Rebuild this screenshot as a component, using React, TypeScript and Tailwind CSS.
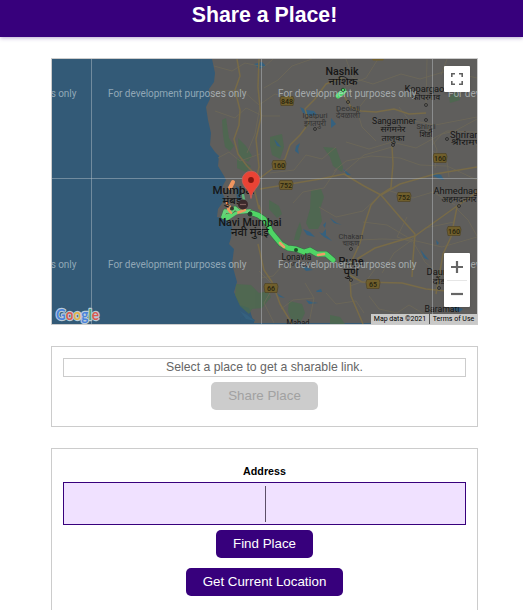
import React from "react";

type Pt = { x: number; y: number };

const PURPLE_BTN =
  "flex h-7 items-center justify-center rounded-[5px] bg-[#37007c] pb-px text-[13.33px] text-white";

const lakes = [
  "M254 64l8-2 4 4-7 3z", "M300 107l6 3 8 1 3 4-7 1-7-3z", "M274 139l4 4 3 4-4-1z",
  "M296 146l4-3-2 6 1 5-4-3z", "M331 118l5 6-5 4z", "M433 173l8 2 3 5-4-1-7-3z", "M343 169l8 6-4 0z",
  "M303 229l7 3 5 5-8-2z", "M319 232l8 4 5 5-8-4z", "M301 265l12 5-7 1z", "M306 300l6 2 6 1-9 1z",
  "M316 291l5-2 1 3-5 0z", "M276 293l9 5-5-1z", "M330 218l7 5 5 2-8-2z", "M420 249l4 5 5 6-5-2z", "M454 306l9 3-3 3-8-2z",
  "M240 311l7 4 8 6-9-2z", "M323 225l3-3-1 6z", "M321 235l5-6 0 6z", "M436 240l3 3-2 2z",
];

const forests = [
  "M222 120l4-2 3 20 5 8-4 5-5-4-2-12z", "M238 138l8 8 6 10-4 6-9-6z",
  "M237 158l6 3 8 5-5 6-9-4z",
  "M270 137l12-3 2 13-4 12-8-4-2-10z", "M323 147l13 1 7 19-1 5-9-6-3-9z", "M311 190l10-1 3 8-4 12 2 12-4 8-9 0-3-6 4-14z",
  "M269 200l10 6 3 8-5 4-8-9z", "M236 284l15 1 8 8 9-2 3 6-9 11-10 1-3 5-9-8-5-11z",
  "M289 301l13 3 3 9-4 8-10-2-3-8z", "M296 232l4-10 2 8-3 10-5 0z",
  "M330 315l10 2 5 7h-15z", "M449 97l7-5 4 8-10 3z",
];

const mainRoads = [
  "M237 59l3 17-5 14 5 20-1 15-5 14 4 15 9 12 9 9",
  "M259 59l-1 28 3 30-5 22 3 28-5 21 5 21",
  "M342 78l-11 4-5 2-12 16-9 9 4 14-9 12-10 10-5 14-13 10-12 9",
  "M343 94l8 13 10 4 15 1 18-3 15 5 17-1",
  "M392 146l1 18-2 24-11 7-9 10-6 18-5 20-10 22",
  "M260 189l30-5 30-5 24-5 20 12 17 9 19-11 35-10 42-7",
  "M381 195l18 21 16 18-2 25-1 18",
  "M477 192l-20 14-42 30-40 12-18 11",
  "M457 207l-6 30-8 17-7 40",
  "M259 205l4 17 14 20",
  "M258 244l6 26 8 12 8 22 12 20", "M350 278l1 18 12 28", "M348 274l14 8 40 1 24 6 30 3",
];

const smallRoads = [
  "M214 66l18 5 13-8 19 4 9-8M220 91l22-1 17 15 16-11 11 3", "M215 111l20 7 11-10 17 8 17 0",
  "M264 88l14-8 14-14 20-7M260 106l-5 28-8 19M218 158l11-6 11 9 20-7",
  "M346 59l7 19 20 6 28-10 19 5 27-8 30 7", "M346 86l20-8 12-19M369 95l-12 15 5 17 14 14M399 107l10 13 26 5 42-8",
  "M346 142l23 7 23-7 24 6 31-17 30 1", "M334 171l12-10 25-5 29 2 20 7 27 1 30 14",
  "M387 190l26 8 20-6 22 13M319 207l17 10 27-6 16-15", "M359 240l23-1 30 1 30 7 35-10M412 240l-25-15-24-3",
  "M411 240l14-12 29-6M412 240l-18 13-12 20M412 240l13 22 17 15M350 286l17-6 13-18",
  "M293 203l10-11 21-4 13-19M282 266l-9 10-12 2M259 271l15 15-10 17 10 20",
  "M326 293l10 11 20-3 8 12M369 296l10 13 18 4 12-8 20 12M305 283l9 15-5 25M281 309l12-9 21-2",
  "M455 207l13 13 9 16M432 145l10-11 13-3 22-12M433 151l14 11 2 15M270 173l24-3 12-15 16 4 14-12",
  "M427 59l-1 46M427 125l10 25-2 18M447 59l-6 16M392 147l-28 8-20 17M407 217l-10 20 15 5",
];

const shields: { x: number; y: number; t: string }[] = [
  { x: 287, y: 101, t: "848" }, { x: 279, y: 165, t: "160" }, { x: 286, y: 185, t: "752" },
  { x: 271, y: 288, t: "66" }, { x: 404, y: 197, t: "752" }, { x: 440, y: 158, t: "160" },
  { x: 454, y: 231, t: "160" }, { x: 373, y: 284, t: "65" },
];

const labels: { x: number; y: number; t: string; w: number; s?: number; bold?: boolean; faint?: boolean }[] = [
  { x: 342, y: 75, t: "Nashik", w: 33, s: 10, bold: true },
  { x: 343, y: 85, t: "नाशिक", w: 29, s: 10, bold: true },
  { x: 348, y: 111, t: "Deolali", w: 24, s: 8, faint: true },
  { x: 348, y: 118, t: "देवळाली", w: 24, s: 8, faint: true },
  { x: 315, y: 118, t: "Igatpuri", w: 25, s: 8, faint: true },
  { x: 315, y: 126, t: "इगतपुरी", w: 22, s: 8, faint: true },
  { x: 427, y: 92, t: "Kopargaon", w: 45, s: 8.5 },
  { x: 426, y: 100, t: "कोपरगाव", w: 28, s: 8 },
  { x: 394, y: 124, t: "Sangamner", w: 44, s: 8.5 },
  { x: 393, y: 132, t: "संगमनेर", w: 25, s: 8.5 },
  { x: 393, y: 141, t: "तालुका", w: 23, s: 8.5 },
  { x: 426, y: 129, t: "Shirdi", w: 19, s: 8, faint: true },
  { x: 426, y: 137, t: "शिर्डी", w: 13, s: 8 },
  { x: 473, y: 138, t: "Shrirampur", w: 46, s: 8.5 },
  { x: 468, y: 145, t: "श्रीरामपूर", w: 34, s: 8 },
  { x: 460, y: 194, t: "Ahmednagar", w: 53, s: 9.5 },
  { x: 459, y: 202, t: "अहमदनगर", w: 35, s: 8.5 },
  { x: 233.5, y: 194, t: "Mumbai", w: 42, s: 10.5, bold: true },
  { x: 232, y: 204, t: "मुंबई", w: 19, s: 10, bold: true },
  { x: 250, y: 226, t: "Navi Mumbai", w: 63, s: 10.5, bold: true },
  { x: 250, y: 236, t: "नवी मुंबई", w: 38, s: 10.5, bold: true },
  { x: 296.5, y: 260, t: "Lonavla", w: 30, s: 9 },
  { x: 297, y: 267, t: "लोणावळा", w: 27, s: 8, faint: true },
  { x: 351, y: 239, t: "Chakan", w: 25, s: 8, faint: true },
  { x: 351, y: 246, t: "चाकण", w: 17, s: 8, faint: true },
  { x: 351, y: 264.5, t: "Pune", w: 25, s: 10.5, bold: true },
  { x: 351, y: 276, t: "पुणे", w: 15, s: 10.5, bold: true },
  { x: 440, y: 275, t: "Daund", w: 27, s: 9 },
  { x: 439, y: 284, t: "दौंड", w: 13, s: 8.5 },
  { x: 442, y: 312, t: "Baramati", w: 35, s: 9 },
  { x: 298, y: 326, t: "Mahad", w: 23, s: 8.5 },
];

const towns: Pt[] = [
  { x: 426, y: 105 }, { x: 393, y: 145 }, { x: 426, y: 120 }, { x: 447, y: 139 }, { x: 459, y: 206 },
  { x: 439, y: 288 }, { x: 351, y: 280 }, { x: 351, y: 249 }, { x: 315, y: 129 }, { x: 348, y: 102 },
];

const tileRows = [97, 267.5];
const tileCols = [-62, 108, 278, 448];

const EXPRESSWAY = "M252 213L258 215 264 219 268 225 271 232 276 238 281 244 288 248 296 249 304 252 310 250 317 254 326 254 333 260";
const CITY = "M223 217l2-6 6 1 4-4 5 4 10-1";

function RoadMap() {
  return (
    <svg viewBox="52 59 425 265" className="block h-[265px] w-[425px]" fontFamily='"Roboto", "Noto Sans", "Liberation Sans", sans-serif'>
      <rect x="52" y="59" width="425" height="265" fill="#335a77" />
      <path
        d="M212 59l3 14-1 9-5 7 1 10-4 8 2 13 3 13-1 12 5 7 4 4-1 10 6 10 2 4-5 9 4 10-7 10-1 8 9 2 6 8-1 11-2 6 5 5-2 15 5 18-3 10 6 13 9 3 5 15H477V59z"
        fill="#5f5e5c"
      />
      <path d="M236 186l5 3-1 12-3-1z M240 318l6-3 9 5-2 4h-12z" fill="#315a77" />
      <g fill="#4c6a4f" opacity="0.8">{forests.map((d) => <path key={d} d={d} />)}</g>
      <g fill="#35617f">{lakes.map((d) => <path key={d} d={d} />)}</g>
      <g fill="none" stroke="#6f6a58" strokeWidth="0.9" opacity="0.85">{smallRoads.map((d) => <path key={d} d={d} />)}</g>
      <g fill="none" stroke="#786b48" strokeWidth="1.5" strokeLinejoin="round">{mainRoads.map((d) => <path key={d} d={d} />)}</g>

      {shields.map((s) => (
        <g key={`${s.x}-${s.y}`}>
          <path d={`M${s.x - 6} ${s.y - 4.5}h12l1 3-1 6h-12l-1-6z`} fill="#705f2c" stroke="#4f4425" strokeWidth="0.7" />
          <text x={s.x} y={s.y + 2.7} fontSize="7" fontWeight="500" textAnchor="middle" fill="#26230f">{s.t}</text>
        </g>
      ))}
      <path d="M372 59h12l-1 1.5h-10z" fill="#705f2c" />

      <g fill="none" strokeLinecap="round" strokeLinejoin="round">
        <path d="M230 188l3-6" stroke="#ef955f" strokeWidth="4" />
        <path d="M243 195l1 5" stroke="#5fae78" strokeWidth="2.5" />
        <path d="M224 216l5-6 8-1 6 3" stroke="#e9a45d" strokeWidth="3.5" />
        <path d={CITY} stroke="#3f744c" strokeWidth="4.6" />
        <path d={CITY} stroke="#67d47a" strokeWidth="3.4" />
        <path d={EXPRESSWAY} stroke="#397148" strokeWidth="6" />
        <path d={EXPRESSWAY} stroke="#4fd465" strokeWidth="4.8" />
        <path d="M237 213l8-3M228 209l3 4M227 203l3 4" stroke="#ec9a5f" strokeWidth="2.5" />
        <path d="M223 217l7-2M227 219l9-6" stroke="#5bd870" strokeWidth="3" />
        <path d="M280 243l4 4M318 255l6-1" stroke="#ee9c68" strokeWidth="2.6" />
        <path d="M338 96l6-5" stroke="#4fd469" strokeWidth="5" />
      </g>

      <g fill="none" stroke="#2b2b2b" strokeWidth="0.9">
        {towns.map((p) => <circle key={`${p.x}-${p.y}`} cx={p.x} cy={p.y} r="1.5" />)}
      </g>
      <circle cx="250" cy="214" r="2" fill="#1d402d" stroke="#243d2c" />
      <circle cx="232" cy="208.5" r="2" fill="#33382d" />
      <circle cx="296" cy="250" r="2" fill="#234c2c" />
      <circle cx="343" cy="90" r="1.8" fill="none" stroke="#234c2c" />

      {labels.map((l) => (
        <text
          key={l.t}
          x={l.x}
          y={l.y}
          textAnchor="middle"
          textLength={l.w}
          lengthAdjust="spacingAndGlyphs"
          fontSize={l.s}
          fontWeight={l.bold ? 500 : 400}
          fill={l.faint ? "#323232" : "#161616"}
        >
          {l.t}
        </text>
      ))}

      <circle cx="243" cy="204.5" r="5" fill="#3b292b" />
      <path d="M240 204.5h6" stroke="#80605d" strokeWidth="1.2" />

      <g stroke="#c8d0d5" strokeOpacity="0.42" strokeWidth="1">
        <path d="M91.5 59v265M261.5 59v265M432.5 59v265M52 178.5h425" />
      </g>
      <g fill="#d9e1e6" fillOpacity="0.58" fontSize="10" fontFamily='"Roboto", "Liberation Sans", sans-serif'>
        {tileRows.map((y) =>
          tileCols.map((x) => (
            <text key={`${x}-${y}`} x={x} y={y} textLength="138.5">For development purposes only</text>
          )),
        )}
      </g>

      <path d="M251 198.500C250.200 190 242.200 187 242.200 180a8.800 8.800 0 1 1 17.600 0C259.800 187 251.800 190 251 198.500z" fill="#ea4335" stroke="#c9605a" strokeWidth="0.8" />
      <circle cx="251" cy="180" r="2.9" fill="#841610" />

      <text
        x="56" y="319.500" textLength="43" lengthAdjust="spacingAndGlyphs"
        fontFamily='"Lato", "Liberation Sans", sans-serif' fontSize="15.500" fontWeight="700"
        stroke="#b9cbd8" strokeWidth="2.400" paintOrder="stroke" strokeLinejoin="round"
      >
        <tspan fill="#4a83dc">G</tspan><tspan fill="#d95a50">o</tspan><tspan fill="#e4b44a">o</tspan><tspan fill="#4a83dc">g</tspan><tspan fill="#51a467">l</tspan><tspan fill="#d95a50">e</tspan>
      </text>
    </svg>
  );
}

function MapPanel() {
  return (
    <section className="relative h-[267px] w-[427px] shrink-0 border border-[#cccccc]">
      <RoadMap />
      <button aria-label="Toggle fullscreen" className="absolute top-[7px] left-[392px] flex h-[26px] w-[26px] items-center justify-center rounded-[1px] bg-white shadow-sm">
        <svg viewBox="0 0 12 12" className="h-3 w-3" fill="none" stroke="#606060" strokeWidth="1.6">
          <path d="M.8 4V.8H4M8 .8h3.2V4M.8 8v3.2H4M8 11.2h3.2V8" />
        </svg>
      </button>
      <div className="absolute top-[194px] left-[392px] flex h-[54px] w-[26px] flex-col items-center rounded-[1px] bg-white shadow-sm">
        <button aria-label="Zoom in" className="flex h-[27px] w-full items-center justify-center">
          <svg viewBox="0 0 12 12" className="h-3 w-3" stroke="#666666" strokeWidth="2.2"><path d="M0 6h12M6 0v12" /></svg>
        </button>
        <div className="h-px w-5 bg-[#e6e6e6]" />
        <button aria-label="Zoom out" className="flex h-[26px] w-full items-center justify-center">
          <svg viewBox="0 0 12 12" className="h-3 w-3" stroke="#666666" strokeWidth="2.2"><path d="M0 6h12" /></svg>
        </button>
      </div>
      <div className="absolute right-0 bottom-0 flex h-[10px] items-center bg-[#c9c9c8] font-['Roboto','Liberation_Sans',sans-serif] text-[7px] leading-[10px] whitespace-nowrap text-black">
        <span className="w-[58px] text-center">Map data ©2021</span>
        <span className="w-12 border-l border-[#555555] text-center">Terms of Use</span>
      </div>
    </section>
  );
}

export default function App() {
  return (
    <div className="h-[610px] w-[523px] overflow-hidden bg-white font-['Liberation_Sans',Arial,sans-serif]">
      <header className="flex h-[37px] justify-center bg-[#37007c] pl-1.5 shadow-[0_1px_4px_rgba(55,0,124,0.35)]">
        <h1 className="h-[30px] text-[21.3px] leading-[30px] font-bold whitespace-nowrap text-white">Share a Place!</h1>
      </header>
      <main className="flex flex-col gap-[21px] pt-[21px] pl-[51px]">
        <MapPanel />
        <section className="flex h-[81px] w-[427px] shrink-0 flex-col items-center border border-[#cccccc] px-[11px] pt-[11px]">
          <div className="flex h-[19px] w-full items-center justify-center border border-[#cccccc] pb-px text-[12.25px] text-[#666666]">
            Select a place to get a sharable link.
          </div>
          <button className="mt-[5px] flex h-7 w-[107px] items-center justify-center rounded-[5px] bg-[#cccccc] pb-px text-[13.33px] text-[#a1a1a1]">
            Share Place
          </button>
        </section>
        <section className="flex h-[190px] w-[427px] shrink-0 flex-col items-center border border-[#cccccc] px-[11px] pt-[14px]">
          <label className="h-[19px] text-[10.7px] leading-[17px] font-bold text-black">Address</label>
          <div className="flex h-[43px] w-full items-center justify-center border border-[#37007c] bg-[#f0e1ff]">
            <span className="ml-px h-9 w-px bg-[#5c4f68]" />
          </div>
          <button className={`${PURPLE_BTN} mt-[5px] w-[97px]`}>Find Place</button>
          <button className={`${PURPLE_BTN} mt-[10px] w-[157px]`}>Get Current Location</button>
        </section>
      </main>
    </div>
  );
}
